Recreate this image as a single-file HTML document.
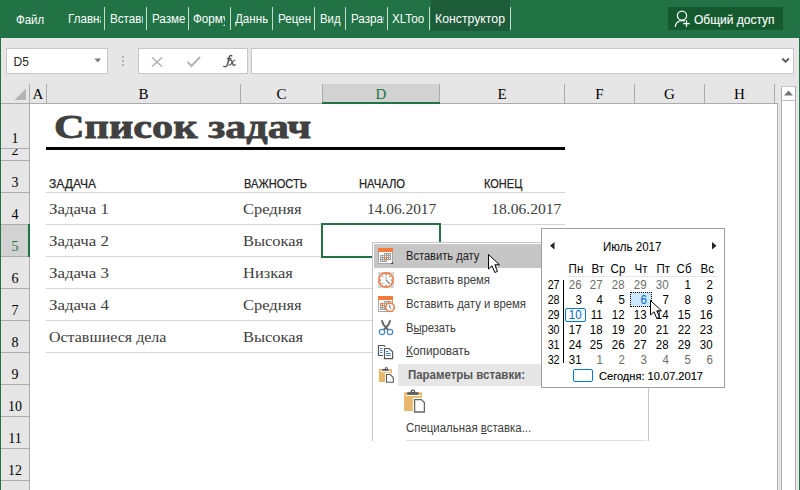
<!DOCTYPE html>
<html><head><meta charset="utf-8"><style>
*{margin:0;padding:0;box-sizing:border-box}
html,body{width:800px;height:490px;overflow:hidden;background:#fff;font-family:"Liberation Sans",sans-serif}
.a{position:absolute}
span.t{position:absolute;white-space:nowrap;line-height:normal;display:block}
.sep{position:absolute;top:7px;width:1px;height:23px;background:rgba(255,255,255,0.75)}
.ch{position:absolute;top:84px;height:19px;border-right:1px solid #ababab;text-align:center;font-family:"Liberation Serif",serif;font-size:15px;line-height:17px;padding-top:2px}
.rh{position:absolute;left:1px;width:29px;border-bottom:1px solid #ababab;border-right:1px solid #ababab;background:#e6e6e6;overflow:hidden}
.rn{position:absolute;left:0;right:0;bottom:2px;text-align:center;font-family:"Liberation Serif",serif;font-size:14px;line-height:14px;color:#000}
.hl{position:absolute;left:46px;width:519px;height:1px;background:#d4d4d4}
</style></head><body>
<!-- ribbon -->
<div class=a style="left:0;top:0;width:800px;height:38px;background:#217346"></div>
<div class=a style="left:431px;top:0;width:79px;height:31px;background:#1d5c38"></div>
<div class=sep style="left:104px"></div><div class=sep style="left:146px"></div><div class=sep style="left:188px"></div>
<div class=sep style="left:230px"></div><div class=sep style="left:272px"></div><div class=sep style="left:314px"></div>
<div class=sep style="left:345px"></div><div class=sep style="left:387px"></div><div class=sep style="left:429px"></div>
<div class=sep style="left:510px"></div>
<div class=a style="left:668px;top:7px;width:115px;height:23px;background:#145a2e"></div>
<svg class=a style="left:674px;top:10px" width="18" height="18" viewBox="0 0 18 18" fill="none" stroke="#fff" stroke-width="1.25">
<circle cx="8" cy="5.6" r="4.6"/><path d="M1.2 16.8 C1.8 12.8 4.6 10.6 8.2 10.6 C9.2 10.6 10 10.8 10.8 11.1"/><path d="M12.5 10.2 V16.8 M9.2 13.5 H15.8"/></svg>
<!-- formula area -->
<div class=a style="left:1px;top:38px;width:798px;height:66px;background:#e6e6e6"></div>
<div class=a style="left:0;top:38px;width:1px;height:452px;background:#217346"></div>
<div class=a style="left:799px;top:38px;width:1px;height:452px;background:#217346"></div>
<div class=a style="left:6px;top:48px;width:102px;height:26px;background:#fff;border:1px solid #c6c6c6"></div>
<svg class=a style="left:94px;top:58px" width="8" height="5"><path d="M0.5 0.5 H7 L3.75 4.5Z" fill="#777"/></svg>
<div class=a style="left:122px;top:56px;width:2px;height:2px;background:#b0b0b0"></div>
<div class=a style="left:122px;top:60px;width:2px;height:2px;background:#b0b0b0"></div>
<div class=a style="left:122px;top:64px;width:2px;height:2px;background:#b0b0b0"></div>
<div class=a style="left:138px;top:48px;width:110px;height:26px;background:#fff;border:1px solid #c6c6c6"></div>
<svg class=a style="left:150px;top:56px" width="14" height="12" fill="none" stroke="#b0b0b0" stroke-width="1.4"><path d="M2 1.5 L12 10.5 M12 1.5 L2 10.5"/></svg>
<svg class=a style="left:186px;top:55px" width="16" height="13" fill="none" stroke="#b5b5b5" stroke-width="2"><path d="M1.5 7 L5.5 11 L14 2"/></svg>
<svg class=a style="left:222px;top:53px" width="16" height="16" fill="none" stroke="#555" stroke-linecap="round">
 <path d="M9.8 2.8 C8.8 2.1 7.6 2.6 7.2 4.4 L5.4 11.8 C5 13.4 3.6 14 1.8 13.4" stroke-width="1.5"/>
 <path d="M5.2 5.6 H9" stroke-width="1.2"/>
 <path d="M7.6 7.2 C9 6.6 9.6 7.3 10.1 9 L10.8 11.2 C11.2 12.4 12 12.6 13.2 11.8" stroke-width="1.3"/>
 <path d="M13 7 C12.2 7 11.6 7.7 10.4 9.4 L9.4 10.7 C8.8 11.7 8.2 12.4 7.2 12" stroke-width="1.2"/>
</svg>
<div class=a style="left:251px;top:48px;width:543px;height:26px;background:#fff;border:1px solid #c6c6c6"></div>
<svg class=a style="left:781px;top:57px" width="10" height="7" fill="none" stroke="#666" stroke-width="2"><path d="M1.3 1.5 L4.6 4.8 L7.9 1.5"/></svg>
<!-- headers -->
<div class=a style="left:1px;top:84px;width:776px;height:20px;background:#e6e6e6"></div>
<div class=ch style="left:30px;width:17px;color:#000;">A</div><div class=ch style="left:47px;width:194px;color:#000;">B</div><div class=ch style="left:241px;width:82px;color:#000;">C</div><div class=ch style="left:323px;width:117px;color:#217346;background:#d2d2d2;">D</div><div class=ch style="left:440px;width:125px;color:#000;">E</div><div class=ch style="left:565px;width:70px;color:#000;">F</div><div class=ch style="left:635px;width:70px;color:#000;">G</div><div class=ch style="left:705px;width:70px;color:#000;">H</div>
<div class=a style="left:1px;top:103px;width:776px;height:1px;background:#ababab"></div>
<div class=a style="left:322px;top:102px;width:118px;height:2px;background:#217346"></div>
<svg class=a style="left:14px;top:88px" width="13" height="13"><path d="M12 0.5 V12 H0.5Z" fill="#b4b4b4"/></svg>
<div class=a style="left:29px;top:84px;width:1px;height:406px;background:#ababab"></div>
<!-- row headers -->
<div class=rh style="top:104px;height:45px;"><div class=rn style="">1</div></div><div class=rh style="top:149px;height:12px;"><div class=rn style="">2</div></div><div class=rh style="top:161px;height:32px;"><div class=rn style="">3</div></div><div class=rh style="top:193px;height:32px;"><div class=rn style="">4</div></div><div class=rh style="top:225px;height:32px;background:#d2d2d2;"><div class=rn style="color:#217346;">5</div></div><div class=rh style="top:257px;height:32px;"><div class=rn style="">6</div></div><div class=rh style="top:289px;height:32px;"><div class=rn style="">7</div></div><div class=rh style="top:321px;height:32px;"><div class=rn style="">8</div></div><div class=rh style="top:353px;height:32px;"><div class=rn style="">9</div></div><div class=rh style="top:385px;height:32px;"><div class=rn style="">10</div></div><div class=rh style="top:417px;height:32px;"><div class=rn style="">11</div></div><div class=rh style="top:449px;height:32px;"><div class=rn style="">12</div></div><div class=rh style="top:481px;height:32px;"><div class=rn style="">13</div></div>
<div class=a style="left:28px;top:224px;width:2px;height:33px;background:#217346"></div>
<div class=a style="left:30px;top:104px;width:747px;height:386px;background:#fff"></div>
<div class=a style="left:777px;top:103px;width:1px;height:387px;background:#ababab"></div>
<div class=a style="left:778px;top:84px;width:21px;height:406px;background:#e6e6e6"></div>
<div class=a style="left:781px;top:86px;width:15px;height:404px;background:#fff;border-left:1px solid #ababab;border-right:1px solid #ababab;border-top:1px solid #c8c8c8"></div>
<div class=a style="left:782px;top:100px;width:13px;height:1px;background:#bdbdbd"></div>
<svg class=a style="left:783px;top:89px" width="11" height="8"><path d="M1 6.5 H10 L5.5 1.5Z" fill="#777"/></svg>
<!-- sheet content -->
<div class=a style="left:46px;top:147px;width:519px;height:3px;background:#000"></div>
<div class=hl style="top:192px"></div><div class=hl style="top:224px"></div><div class=hl style="top:256px"></div>
<div class=hl style="top:288px"></div><div class=hl style="top:320px"></div><div class=hl style="top:352px"></div>
<div class=a style="left:321px;top:223px;width:120px;height:35px;border:2px solid #217346"></div>
<!-- context menu -->
<div class=a style="left:372px;top:242px;width:277px;height:199px;background:#fff;border-left:1px solid #c6c6c6;border-top:1px solid #c6c6c6;border-right:1px solid #c6c6c6"></div>
<div class=a style="left:406px;top:440px;width:241px;height:1px;background:#dde1e6"></div>
<div class=a style="left:374px;top:244px;width:273px;height:24px;background:#c6c6c6"></div>
<div class=a style="left:398px;top:364px;width:249px;height:22px;background:#e6e6e6"></div>
<!-- icons -->
<svg class=a style="left:377px;top:247px" width="18" height="18" shape-rendering="crispEdges">
 <rect x="1.5" y="1.5" width="14" height="15" fill="#fff" stroke="#a8a8a8"/>
 <rect x="1" y="1" width="15" height="4" fill="#f47a3c"/>
 <g fill="#a0a0a0"><rect x="7" y="6" width="7" height="3"/><rect x="3" y="8" width="11" height="5"/><rect x="3" y="13" width="7" height="2"/></g>
 <g fill="#fff"><rect x="4" y="9" width="1" height="1"/><rect x="6" y="9" width="1" height="1"/><rect x="8" y="9" width="1" height="1"/><rect x="10" y="9" width="1" height="1"/><rect x="12" y="9" width="1" height="1"/><rect x="4" y="11" width="1" height="1"/><rect x="6" y="11" width="1" height="1"/><rect x="8" y="11" width="1" height="1"/><rect x="10" y="11" width="1" height="1"/><rect x="12" y="11" width="1" height="1"/><rect x="8" y="7" width="1" height="1"/><rect x="10" y="7" width="1" height="1"/><rect x="12" y="7" width="1" height="1"/><rect x="4" y="13" width="1" height="1"/><rect x="6" y="13" width="1" height="1"/><rect x="8" y="13" width="1" height="1"/></g>
 <rect x="7" y="10" width="3" height="3" fill="#f47a3c"/><rect x="8" y="11" width="1" height="1" fill="#fff"/>
 <path d="M16 14 V17 H13Z" fill="#444"/>
</svg>
<div class=a style="left:378px;top:272px;width:16px;height:16px;background:#d6d6d6"></div>
<svg class=a style="left:377px;top:271px" width="18" height="18" fill="none">
 <circle cx="9" cy="9" r="7.1" fill="#fff" stroke="#f47a3c" stroke-width="1.6"/>
 <g fill="#6a6a6a"><rect x="8.5" y="3" width="1.2" height="1"/><rect x="8.5" y="14" width="1.2" height="1"/><rect x="3" y="8.5" width="1" height="1.2"/><rect x="14" y="8.5" width="1" height="1.2"/>
 <rect x="5.2" y="5" width="1" height="1"/><rect x="12" y="5" width="1" height="1"/><rect x="5.2" y="12" width="1" height="1"/><rect x="12" y="12" width="1" height="1"/></g>
 <path d="M9 4 V9" stroke="#b8b8b8" stroke-width="1.1"/><path d="M9 9 L12.4 12.4" stroke="#777" stroke-width="1.1"/>
</svg>
<svg class=a style="left:377px;top:295px" width="18" height="18" shape-rendering="crispEdges">
 <rect x="1.5" y="1.5" width="14" height="15" fill="#fff" stroke="#a8a8a8"/>
 <rect x="1" y="1" width="15" height="4" fill="#f47a3c"/>
 <g fill="#a0a0a0"><rect x="7" y="6" width="7" height="3"/><rect x="3" y="8" width="11" height="7"/></g>
 <g fill="#fff"><rect x="4" y="9" width="1" height="1"/><rect x="6" y="9" width="1" height="1"/><rect x="8" y="9" width="1" height="1"/><rect x="10" y="9" width="1" height="1"/><rect x="12" y="9" width="1" height="1"/><rect x="4" y="11" width="1" height="1"/><rect x="6" y="11" width="1" height="1"/><rect x="8" y="11" width="1" height="1"/><rect x="10" y="11" width="1" height="1"/><rect x="12" y="11" width="1" height="1"/><rect x="4" y="13" width="1" height="1"/><rect x="6" y="13" width="1" height="1"/><rect x="8" y="13" width="1" height="1"/><rect x="10" y="13" width="1" height="1"/><rect x="12" y="13" width="1" height="1"/><rect x="8" y="7" width="1" height="1"/><rect x="10" y="7" width="1" height="1"/><rect x="12" y="7" width="1" height="1"/></g>
 <rect x="3" y="8" width="3" height="3" fill="#f47a3c"/><rect x="4" y="9" width="1" height="1" fill="#fff"/>
 <circle cx="13" cy="12.2" r="4.3" fill="#fff" stroke="#f47a3c" stroke-width="1.5" shape-rendering="auto"/>
 <path d="M12.8 9.6 V12.6 L14.2 13.8" stroke="#777" stroke-width="1" fill="none" shape-rendering="auto"/>
</svg>
<svg class=a style="left:377px;top:319px" width="18" height="17" fill="none">
 <path d="M5 2 Q6 6 9 8.5 L11.3 11" stroke="#666" stroke-width="2" stroke-linecap="round"/>
 <path d="M13 2 Q12 6 9 8.5 L6.7 11" stroke="#666" stroke-width="2" stroke-linecap="round"/>
 <circle cx="5" cy="13" r="2.7" fill="#fff" stroke="#4a86c5" stroke-width="1.2"/><circle cx="13" cy="13" r="2.7" fill="#fff" stroke="#4a86c5" stroke-width="1.2"/>
</svg>
<svg class=a style="left:377px;top:344px" width="18" height="17" fill="none">
 <path d="M6 11.5 H1.5 V1.5 H7.2 L8.3 2.6" stroke="#555" stroke-width="1.2"/>
 <g fill="#4a86c5"><rect x="3" y="4" width="2.5" height="1"/><rect x="3" y="6" width="2.5" height="1"/><rect x="3" y="8" width="2.5" height="1"/></g>
 <path d="M7.5 4.5 H12.3 L15.6 7.8 V14.6 H7.5Z" fill="#fff" stroke="#555" stroke-width="1.2"/>
 <rect x="13" y="5.5" width="1" height="1" fill="#888"/>
 <g fill="#4a86c5"><rect x="9" y="7" width="2.2" height="1"/><rect x="9" y="9" width="4.8" height="1"/><rect x="9" y="11" width="4.8" height="1"/></g>
</svg>
<svg class=a style="left:377px;top:366px" width="18" height="18">
 <rect x="2" y="3" width="13" height="13" fill="#e8b96c"/>
 <rect x="3.8" y="4.6" width="9.4" height="1.5" fill="#fff"/>
 <rect x="5" y="3" width="6.8" height="1.7" rx="0.6" fill="#555"/>
 <circle cx="9.3" cy="2.3" r="1" fill="none" stroke="#555" stroke-width="1"/>
 <path d="M8 7 H13.8 L17.6 10.8 V17.8 H8Z" fill="#fff"/>
 <path d="M9.5 8.5 H13.3 L16.3 11.5 V16.3 H9.5Z" fill="#fff" stroke="#555" stroke-width="1.1"/>
</svg>
<svg class=a style="left:403px;top:388px" width="24" height="27">
 <rect x="1" y="4.3" width="18" height="18.7" rx="1" fill="#e8b96c"/>
 <rect x="2.8" y="6.7" width="14.7" height="1.3" fill="#fff"/>
 <rect x="4" y="4.3" width="11.7" height="2.4" rx="1" fill="#555"/>
 <circle cx="9.9" cy="3.8" r="1.7" fill="none" stroke="#555" stroke-width="1.4"/>
 <path d="M9.8 9.8 H19 L23 13.8 V25.5 H9.8Z" fill="#fff"/>
 <path d="M11.6 11.6 H18.4 L21.4 14.6 V24 H11.6Z" fill="#fff" stroke="#666" stroke-width="1.3"/>
 <circle cx="19.5" cy="12.8" r="0.8" fill="#888"/>
</svg>
<!-- cursor 1 -->
<svg class=a style="left:487px;top:253px" width="16" height="22"><path d="M1.5 1.5 V16 L5 12.8 L7.8 19.5 L10.5 18.3 L7.8 11.8 H12.5Z" fill="#fff" stroke="#000" stroke-width="1" stroke-linejoin="round"/></svg>
<!-- calendar -->
<div class=a style="left:541px;top:228px;width:184px;height:160px;background:#fff;border:1px solid #a0a0a0"></div>
<svg class=a style="left:549px;top:241px" width="7" height="9"><path d="M5.5 1 V8.5 L1 4.75Z" fill="#222"/></svg>
<svg class=a style="left:711px;top:241px" width="7" height="9"><path d="M1 1 V8.5 L5.5 4.75Z" fill="#222"/></svg>
<div class=a style="left:567px;top:276px;width:150px;height:1px;background:#e6e6e6"></div>
<div class=a style="left:563px;top:280px;width:1px;height:83px;background:#000"></div>
<div class=a style="left:630px;top:292px;width:22px;height:15px;background:#cce8ff;border:1px dotted #000"></div>
<div class=a style="left:565px;top:308px;width:21px;height:14px;border:1px solid #0078d7;border-radius:2px"></div>
<div class=a style="left:573px;top:369px;width:20px;height:13px;border:1.5px solid #0078d7;border-radius:2px"></div>
<span class=t style="left:16.30px;top:13.19px;font-family:'Liberation Sans', sans-serif;font-size:12.5px;color:#ffffff;font-weight:normal;transform:scaleX(0.9175);transform-origin:left 0;">Файл</span>
<div style="position:absolute;left:65.5px;top:0;width:35.5px;height:38px;overflow:hidden"><div style="position:absolute;left:-65.5px;top:0;width:800px;height:38px"><span class=t style="left:67.50px;top:12.29px;font-family:'Liberation Sans', sans-serif;font-size:12.5px;color:#ffffff;font-weight:normal;transform:scaleX(0.9300);transform-origin:left 0;">Главная</span></div></div>
<div style="position:absolute;left:107.8px;top:0;width:35.2px;height:38px;overflow:hidden"><div style="position:absolute;left:-107.8px;top:0;width:800px;height:38px"><span class=t style="left:109.80px;top:12.29px;font-family:'Liberation Sans', sans-serif;font-size:12.5px;color:#ffffff;font-weight:normal;transform:scaleX(0.9300);transform-origin:left 0;">Вставка</span></div></div>
<div style="position:absolute;left:149.9px;top:0;width:35.099999999999994px;height:38px;overflow:hidden"><div style="position:absolute;left:-149.9px;top:0;width:800px;height:38px"><span class=t style="left:151.90px;top:12.29px;font-family:'Liberation Sans', sans-serif;font-size:12.5px;color:#ffffff;font-weight:normal;transform:scaleX(0.9300);transform-origin:left 0;">Разметка страницы</span></div></div>
<div style="position:absolute;left:191.2px;top:0;width:34.30000000000001px;height:38px;overflow:hidden"><div style="position:absolute;left:-191.2px;top:0;width:800px;height:38px"><span class=t style="left:193.20px;top:12.29px;font-family:'Liberation Sans', sans-serif;font-size:12.5px;color:#ffffff;font-weight:normal;transform:scaleX(0.9300);transform-origin:left 0;">Формулы</span></div></div>
<div style="position:absolute;left:233px;top:0;width:35px;height:38px;overflow:hidden"><div style="position:absolute;left:-233px;top:0;width:800px;height:38px"><span class=t style="left:235.00px;top:12.29px;font-family:'Liberation Sans', sans-serif;font-size:12.5px;color:#ffffff;font-weight:normal;transform:scaleX(0.9300);transform-origin:left 0;">Данные</span></div></div>
<div style="position:absolute;left:275.5px;top:0;width:35.5px;height:38px;overflow:hidden"><div style="position:absolute;left:-275.5px;top:0;width:800px;height:38px"><span class=t style="left:277.50px;top:12.29px;font-family:'Liberation Sans', sans-serif;font-size:12.5px;color:#ffffff;font-weight:normal;transform:scaleX(0.9300);transform-origin:left 0;">Рецензирование</span></div></div>
<div style="position:absolute;left:348.6px;top:0;width:35.39999999999998px;height:38px;overflow:hidden"><div style="position:absolute;left:-348.6px;top:0;width:800px;height:38px"><span class=t style="left:350.60px;top:12.29px;font-family:'Liberation Sans', sans-serif;font-size:12.5px;color:#ffffff;font-weight:normal;transform:scaleX(0.9300);transform-origin:left 0;">Разработчик</span></div></div>
<div style="position:absolute;left:389.9px;top:0;width:34.60000000000002px;height:38px;overflow:hidden"><div style="position:absolute;left:-389.9px;top:0;width:800px;height:38px"><span class=t style="left:391.90px;top:12.29px;font-family:'Liberation Sans', sans-serif;font-size:12.5px;color:#ffffff;font-weight:normal;transform:scaleX(0.9300);transform-origin:left 0;">XLTools</span></div></div>
<span class=t style="left:320.40px;top:12.29px;font-family:'Liberation Sans', sans-serif;font-size:12.5px;color:#ffffff;font-weight:normal;transform:scaleX(0.9061);transform-origin:left 0;">Вид</span>
<span class=t style="left:435.00px;top:12.29px;font-family:'Liberation Sans', sans-serif;font-size:12.5px;color:#ffffff;font-weight:normal;transform:scaleX(0.9820);transform-origin:left 0;">Конструктор</span>
<span class=t style="left:694.00px;top:12.89px;font-family:'Liberation Sans', sans-serif;font-size:12.5px;color:#ffffff;font-weight:normal;transform:scaleX(0.9597);transform-origin:left 0;-webkit-text-stroke:0.1px #fff">Общий доступ</span>
<span class=t style="left:13.60px;top:54.94px;font-family:'Liberation Sans', sans-serif;font-size:12px;color:#262626;font-weight:normal;">D5</span>
<span class=t style="left:54.00px;top:108.45px;font-family:'Liberation Serif', serif;font-size:33.5px;color:#404040;font-weight:bold;transform:scaleX(1.2625);transform-origin:left 0;-webkit-text-stroke:0.8px #404040">Список задач</span>
<span class=t style="left:48.60px;top:176.94px;font-family:'Liberation Sans', sans-serif;font-size:12px;color:#262626;font-weight:normal;transform:scaleX(1.0051);transform-origin:left 0;-webkit-text-stroke:0.25px #262626">ЗАДАЧА</span>
<span class=t style="left:243.70px;top:176.94px;font-family:'Liberation Sans', sans-serif;font-size:12px;color:#262626;font-weight:normal;transform:scaleX(0.9241);transform-origin:left 0;-webkit-text-stroke:0.25px #262626">ВАЖНОСТЬ</span>
<span class=t style="left:358.60px;top:176.94px;font-family:'Liberation Sans', sans-serif;font-size:12px;color:#262626;font-weight:normal;transform:scaleX(0.9346);transform-origin:left 0;-webkit-text-stroke:0.25px #262626">НАЧАЛО</span>
<span class=t style="left:483.70px;top:176.94px;font-family:'Liberation Sans', sans-serif;font-size:12px;color:#262626;font-weight:normal;transform:scaleX(0.9174);transform-origin:left 0;-webkit-text-stroke:0.25px #262626">КОНЕЦ</span>
<span class=t style="left:49.20px;top:200.68px;font-family:'Liberation Serif', serif;font-size:14.5px;color:#404040;font-weight:normal;transform:scaleX(1.1640);transform-origin:left 0;">Задача 1</span>
<span class=t style="left:243.30px;top:200.68px;font-family:'Liberation Serif', serif;font-size:14.5px;color:#404040;font-weight:normal;transform:scaleX(1.1350);transform-origin:left 0;">Средняя</span>
<span class=t style="right:364.20px;top:200.68px;font-family:'Liberation Serif', serif;font-size:14.5px;color:#404040;font-weight:normal;transform:scaleX(1.0621);transform-origin:right 0;">14.06.2017</span>
<span class=t style="right:238.70px;top:200.68px;font-family:'Liberation Serif', serif;font-size:14.5px;color:#404040;font-weight:normal;transform:scaleX(1.0728);transform-origin:right 0;">18.06.2017</span>
<span class=t style="left:49.20px;top:232.68px;font-family:'Liberation Serif', serif;font-size:14.5px;color:#404040;font-weight:normal;transform:scaleX(1.1640);transform-origin:left 0;">Задача 2</span>
<span class=t style="left:243.30px;top:232.68px;font-family:'Liberation Serif', serif;font-size:14.5px;color:#404040;font-weight:normal;transform:scaleX(1.1350);transform-origin:left 0;">Высокая</span>
<span class=t style="left:49.20px;top:264.68px;font-family:'Liberation Serif', serif;font-size:14.5px;color:#404040;font-weight:normal;transform:scaleX(1.1640);transform-origin:left 0;">Задача 3</span>
<span class=t style="left:243.30px;top:264.68px;font-family:'Liberation Serif', serif;font-size:14.5px;color:#404040;font-weight:normal;transform:scaleX(1.1350);transform-origin:left 0;">Низкая</span>
<span class=t style="left:49.20px;top:296.68px;font-family:'Liberation Serif', serif;font-size:14.5px;color:#404040;font-weight:normal;transform:scaleX(1.1640);transform-origin:left 0;">Задача 4</span>
<span class=t style="left:243.30px;top:296.68px;font-family:'Liberation Serif', serif;font-size:14.5px;color:#404040;font-weight:normal;transform:scaleX(1.1350);transform-origin:left 0;">Средняя</span>
<span class=t style="left:49.20px;top:328.68px;font-family:'Liberation Serif', serif;font-size:14.5px;color:#404040;font-weight:normal;transform:scaleX(1.1009);transform-origin:left 0;">Оставшиеся дела</span>
<span class=t style="left:243.30px;top:328.68px;font-family:'Liberation Serif', serif;font-size:14.5px;color:#404040;font-weight:normal;transform:scaleX(1.1350);transform-origin:left 0;">Высокая</span>
<span class=t style="left:405.60px;top:249.24px;font-family:'Liberation Sans', sans-serif;font-size:12px;color:#1e1e1e;font-weight:normal;transform:scaleX(0.9262);transform-origin:left 0;">Вставить дату</span>
<span class=t style="left:405.60px;top:272.74px;font-family:'Liberation Sans', sans-serif;font-size:12px;color:#404040;font-weight:normal;transform:scaleX(0.9473);transform-origin:left 0;">Вставить время</span>
<span class=t style="left:405.60px;top:296.74px;font-family:'Liberation Sans', sans-serif;font-size:12px;color:#404040;font-weight:normal;transform:scaleX(0.9442);transform-origin:left 0;">Вставить дату и время</span>
<span class=t style="left:405.60px;top:320.54px;font-family:'Liberation Sans', sans-serif;font-size:12px;color:#404040;font-weight:normal;transform:scaleX(0.9327);transform-origin:left 0;">В<u>ы</u>резать</span>
<span class=t style="left:405.60px;top:344.14px;font-family:'Liberation Sans', sans-serif;font-size:12px;color:#404040;font-weight:normal;transform:scaleX(0.9903);transform-origin:left 0;"><u>К</u>опировать</span>
<span class=t style="left:407.90px;top:367.74px;font-family:'Liberation Sans', sans-serif;font-size:12px;color:#555;font-weight:bold;transform:scaleX(0.9547);transform-origin:left 0;">Параметры вставки:</span>
<span class=t style="left:405.50px;top:420.84px;font-family:'Liberation Sans', sans-serif;font-size:12px;color:#404040;font-weight:normal;transform:scaleX(0.9532);transform-origin:left 0;">Специальная <u>в</u>ставка...</span>
<span class=t style="left:603.30px;top:240.36px;font-family:'Liberation Sans', sans-serif;font-size:12.2px;color:#000;font-weight:normal;transform:scaleX(0.9498);transform-origin:left 0;">Июль 2017</span>
<span class=t style="right:217.00px;top:262.34px;font-family:'Liberation Sans', sans-serif;font-size:12px;color:#000;font-weight:normal;transform:scaleX(0.9600);transform-origin:right 0;">Пн</span>
<span class=t style="right:196.20px;top:262.34px;font-family:'Liberation Sans', sans-serif;font-size:12px;color:#000;font-weight:normal;transform:scaleX(0.9600);transform-origin:right 0;">Вт</span>
<span class=t style="right:174.20px;top:262.34px;font-family:'Liberation Sans', sans-serif;font-size:12px;color:#000;font-weight:normal;transform:scaleX(0.9600);transform-origin:right 0;">Ср</span>
<span class=t style="right:153.00px;top:262.34px;font-family:'Liberation Sans', sans-serif;font-size:12px;color:#000;font-weight:normal;transform:scaleX(0.9600);transform-origin:right 0;">Чт</span>
<span class=t style="right:130.00px;top:262.34px;font-family:'Liberation Sans', sans-serif;font-size:12px;color:#000;font-weight:normal;transform:scaleX(0.9600);transform-origin:right 0;">Пт</span>
<span class=t style="right:108.00px;top:262.34px;font-family:'Liberation Sans', sans-serif;font-size:12px;color:#000;font-weight:normal;transform:scaleX(0.9600);transform-origin:right 0;">Сб</span>
<span class=t style="right:86.20px;top:262.34px;font-family:'Liberation Sans', sans-serif;font-size:12px;color:#000;font-weight:normal;transform:scaleX(0.9600);transform-origin:right 0;">Вс</span>
<span class=t style="right:240.50px;top:278.36px;font-family:'Liberation Sans', sans-serif;font-size:12.2px;color:#000;font-weight:normal;transform:scaleX(0.8800);transform-origin:right 0;">27</span>
<span class=t style="right:218.70px;top:278.36px;font-family:'Liberation Sans', sans-serif;font-size:12.2px;color:#6d6d6d;font-weight:normal;transform:scaleX(0.9400);transform-origin:right 0;">26</span>
<span class=t style="right:197.00px;top:278.36px;font-family:'Liberation Sans', sans-serif;font-size:12.2px;color:#6d6d6d;font-weight:normal;transform:scaleX(0.9400);transform-origin:right 0;">27</span>
<span class=t style="right:175.00px;top:278.36px;font-family:'Liberation Sans', sans-serif;font-size:12.2px;color:#6d6d6d;font-weight:normal;transform:scaleX(0.9400);transform-origin:right 0;">28</span>
<span class=t style="right:153.00px;top:278.36px;font-family:'Liberation Sans', sans-serif;font-size:12.2px;color:#6d6d6d;font-weight:normal;transform:scaleX(0.9400);transform-origin:right 0;">29</span>
<span class=t style="right:131.50px;top:278.36px;font-family:'Liberation Sans', sans-serif;font-size:12.2px;color:#6d6d6d;font-weight:normal;transform:scaleX(0.9400);transform-origin:right 0;">30</span>
<span class=t style="right:109.50px;top:278.36px;font-family:'Liberation Sans', sans-serif;font-size:12.2px;color:#000;font-weight:normal;transform:scaleX(0.9400);transform-origin:right 0;">1</span>
<span class=t style="right:87.50px;top:278.36px;font-family:'Liberation Sans', sans-serif;font-size:12.2px;color:#000;font-weight:normal;transform:scaleX(0.9400);transform-origin:right 0;">2</span>
<span class=t style="right:240.50px;top:293.36px;font-family:'Liberation Sans', sans-serif;font-size:12.2px;color:#000;font-weight:normal;transform:scaleX(0.8800);transform-origin:right 0;">28</span>
<span class=t style="right:218.70px;top:293.36px;font-family:'Liberation Sans', sans-serif;font-size:12.2px;color:#000;font-weight:normal;transform:scaleX(0.9400);transform-origin:right 0;">3</span>
<span class=t style="right:197.00px;top:293.36px;font-family:'Liberation Sans', sans-serif;font-size:12.2px;color:#000;font-weight:normal;transform:scaleX(0.9400);transform-origin:right 0;">4</span>
<span class=t style="right:175.00px;top:293.36px;font-family:'Liberation Sans', sans-serif;font-size:12.2px;color:#000;font-weight:normal;transform:scaleX(0.9400);transform-origin:right 0;">5</span>
<span class=t style="right:153.00px;top:293.36px;font-family:'Liberation Sans', sans-serif;font-size:12.2px;color:#0066cc;font-weight:normal;transform:scaleX(0.9400);transform-origin:right 0;">6</span>
<span class=t style="right:131.50px;top:293.36px;font-family:'Liberation Sans', sans-serif;font-size:12.2px;color:#000;font-weight:normal;transform:scaleX(0.9400);transform-origin:right 0;">7</span>
<span class=t style="right:109.50px;top:293.36px;font-family:'Liberation Sans', sans-serif;font-size:12.2px;color:#000;font-weight:normal;transform:scaleX(0.9400);transform-origin:right 0;">8</span>
<span class=t style="right:87.50px;top:293.36px;font-family:'Liberation Sans', sans-serif;font-size:12.2px;color:#000;font-weight:normal;transform:scaleX(0.9400);transform-origin:right 0;">9</span>
<span class=t style="right:240.50px;top:308.36px;font-family:'Liberation Sans', sans-serif;font-size:12.2px;color:#000;font-weight:normal;transform:scaleX(0.8800);transform-origin:right 0;">29</span>
<span class=t style="right:218.70px;top:308.36px;font-family:'Liberation Sans', sans-serif;font-size:12.2px;color:#0066cc;font-weight:normal;transform:scaleX(0.9400);transform-origin:right 0;">10</span>
<span class=t style="right:197.00px;top:308.36px;font-family:'Liberation Sans', sans-serif;font-size:12.2px;color:#000;font-weight:normal;transform:scaleX(0.9400);transform-origin:right 0;">11</span>
<span class=t style="right:175.00px;top:308.36px;font-family:'Liberation Sans', sans-serif;font-size:12.2px;color:#000;font-weight:normal;transform:scaleX(0.9400);transform-origin:right 0;">12</span>
<span class=t style="right:153.00px;top:308.36px;font-family:'Liberation Sans', sans-serif;font-size:12.2px;color:#000;font-weight:normal;transform:scaleX(0.9400);transform-origin:right 0;">13</span>
<span class=t style="right:131.50px;top:308.36px;font-family:'Liberation Sans', sans-serif;font-size:12.2px;color:#000;font-weight:normal;transform:scaleX(0.9400);transform-origin:right 0;">14</span>
<span class=t style="right:109.50px;top:308.36px;font-family:'Liberation Sans', sans-serif;font-size:12.2px;color:#000;font-weight:normal;transform:scaleX(0.9400);transform-origin:right 0;">15</span>
<span class=t style="right:87.50px;top:308.36px;font-family:'Liberation Sans', sans-serif;font-size:12.2px;color:#000;font-weight:normal;transform:scaleX(0.9400);transform-origin:right 0;">16</span>
<span class=t style="right:240.50px;top:323.36px;font-family:'Liberation Sans', sans-serif;font-size:12.2px;color:#000;font-weight:normal;transform:scaleX(0.8800);transform-origin:right 0;">30</span>
<span class=t style="right:218.70px;top:323.36px;font-family:'Liberation Sans', sans-serif;font-size:12.2px;color:#000;font-weight:normal;transform:scaleX(0.9400);transform-origin:right 0;">17</span>
<span class=t style="right:197.00px;top:323.36px;font-family:'Liberation Sans', sans-serif;font-size:12.2px;color:#000;font-weight:normal;transform:scaleX(0.9400);transform-origin:right 0;">18</span>
<span class=t style="right:175.00px;top:323.36px;font-family:'Liberation Sans', sans-serif;font-size:12.2px;color:#000;font-weight:normal;transform:scaleX(0.9400);transform-origin:right 0;">19</span>
<span class=t style="right:153.00px;top:323.36px;font-family:'Liberation Sans', sans-serif;font-size:12.2px;color:#000;font-weight:normal;transform:scaleX(0.9400);transform-origin:right 0;">20</span>
<span class=t style="right:131.50px;top:323.36px;font-family:'Liberation Sans', sans-serif;font-size:12.2px;color:#000;font-weight:normal;transform:scaleX(0.9400);transform-origin:right 0;">21</span>
<span class=t style="right:109.50px;top:323.36px;font-family:'Liberation Sans', sans-serif;font-size:12.2px;color:#000;font-weight:normal;transform:scaleX(0.9400);transform-origin:right 0;">22</span>
<span class=t style="right:87.50px;top:323.36px;font-family:'Liberation Sans', sans-serif;font-size:12.2px;color:#000;font-weight:normal;transform:scaleX(0.9400);transform-origin:right 0;">23</span>
<span class=t style="right:240.50px;top:338.36px;font-family:'Liberation Sans', sans-serif;font-size:12.2px;color:#000;font-weight:normal;transform:scaleX(0.8800);transform-origin:right 0;">31</span>
<span class=t style="right:218.70px;top:338.36px;font-family:'Liberation Sans', sans-serif;font-size:12.2px;color:#000;font-weight:normal;transform:scaleX(0.9400);transform-origin:right 0;">24</span>
<span class=t style="right:197.00px;top:338.36px;font-family:'Liberation Sans', sans-serif;font-size:12.2px;color:#000;font-weight:normal;transform:scaleX(0.9400);transform-origin:right 0;">25</span>
<span class=t style="right:175.00px;top:338.36px;font-family:'Liberation Sans', sans-serif;font-size:12.2px;color:#000;font-weight:normal;transform:scaleX(0.9400);transform-origin:right 0;">26</span>
<span class=t style="right:153.00px;top:338.36px;font-family:'Liberation Sans', sans-serif;font-size:12.2px;color:#000;font-weight:normal;transform:scaleX(0.9400);transform-origin:right 0;">27</span>
<span class=t style="right:131.50px;top:338.36px;font-family:'Liberation Sans', sans-serif;font-size:12.2px;color:#000;font-weight:normal;transform:scaleX(0.9400);transform-origin:right 0;">28</span>
<span class=t style="right:109.50px;top:338.36px;font-family:'Liberation Sans', sans-serif;font-size:12.2px;color:#000;font-weight:normal;transform:scaleX(0.9400);transform-origin:right 0;">29</span>
<span class=t style="right:87.50px;top:338.36px;font-family:'Liberation Sans', sans-serif;font-size:12.2px;color:#000;font-weight:normal;transform:scaleX(0.9400);transform-origin:right 0;">30</span>
<span class=t style="right:240.50px;top:353.36px;font-family:'Liberation Sans', sans-serif;font-size:12.2px;color:#000;font-weight:normal;transform:scaleX(0.8800);transform-origin:right 0;">32</span>
<span class=t style="right:218.70px;top:353.36px;font-family:'Liberation Sans', sans-serif;font-size:12.2px;color:#000;font-weight:normal;transform:scaleX(0.9400);transform-origin:right 0;">31</span>
<span class=t style="right:197.00px;top:353.36px;font-family:'Liberation Sans', sans-serif;font-size:12.2px;color:#6d6d6d;font-weight:normal;transform:scaleX(0.9400);transform-origin:right 0;">1</span>
<span class=t style="right:175.00px;top:353.36px;font-family:'Liberation Sans', sans-serif;font-size:12.2px;color:#6d6d6d;font-weight:normal;transform:scaleX(0.9400);transform-origin:right 0;">2</span>
<span class=t style="right:153.00px;top:353.36px;font-family:'Liberation Sans', sans-serif;font-size:12.2px;color:#6d6d6d;font-weight:normal;transform:scaleX(0.9400);transform-origin:right 0;">3</span>
<span class=t style="right:131.50px;top:353.36px;font-family:'Liberation Sans', sans-serif;font-size:12.2px;color:#6d6d6d;font-weight:normal;transform:scaleX(0.9400);transform-origin:right 0;">4</span>
<span class=t style="right:109.50px;top:353.36px;font-family:'Liberation Sans', sans-serif;font-size:12.2px;color:#6d6d6d;font-weight:normal;transform:scaleX(0.9400);transform-origin:right 0;">5</span>
<span class=t style="right:87.50px;top:353.36px;font-family:'Liberation Sans', sans-serif;font-size:12.2px;color:#6d6d6d;font-weight:normal;transform:scaleX(0.9400);transform-origin:right 0;">6</span>
<span class=t style="left:598.60px;top:369.32px;font-family:'Liberation Sans', sans-serif;font-size:11.8px;color:#000;font-weight:normal;transform:scaleX(0.9385);transform-origin:left 0;-webkit-text-stroke:0.15px #000">Сегодня: 10.07.2017</span>
<!-- cursor 2 -->
<svg class=a style="left:649px;top:299px" width="16" height="22"><path d="M1.5 1.5 V16 L5 12.8 L7.8 19.5 L10.5 18.3 L7.8 11.8 H12.5Z" fill="#fff" stroke="#000" stroke-width="1" stroke-linejoin="round"/></svg>
</body></html>
